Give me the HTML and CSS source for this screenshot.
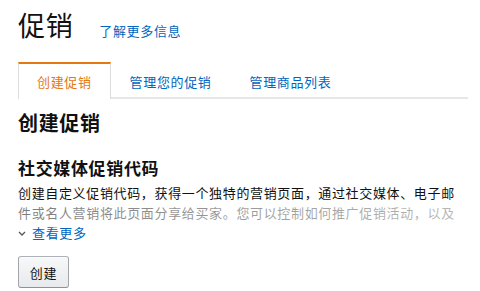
FILE: index.html
```html
<!DOCTYPE html>
<html lang="zh-CN">
<head>
    <meta charset="UTF-8">
    <meta name="viewport" content="width=device-width, initial-scale=1.0">
    <title>促销</title>
    <link rel="stylesheet" href="styles.css">
</head>
<body>

    <!-- Page header -->
    <div class="page-head">
        <h1>促销</h1>
        <a href="#" class="learn-more">了解更多信息</a>
    </div>

    <!-- Tabs -->
    <ul class="tabs">
        <li class="tab active"><a href="#">创建促销</a></li>
        <li class="tab"><a href="#">管理您的促销</a></li>
        <li class="tab"><a href="#">管理商品列表</a></li>
    </ul>

    <!-- Create promotion -->
    <div class="content">
        <h2>创建促销</h2>
        <h3>社交媒体促销代码</h3>
        <div class="expander">
            <p>创建自定义促销代码，获得一个独特的营销页面，通过社交媒体、电子邮件或名人营销将此页面分享给买家。您可以控制如何推广促销活动，以及</p>
            <div class="fade"></div>
        </div>
        <a href="#" class="see-more">
            <svg class="chevron" width="8" height="5" viewBox="0 0 8 5"><path d="M1 1 L4 4 L7 1" fill="none" stroke="#555" stroke-width="1.3"/></svg>
            <span>查看更多</span>
        </a>
        <button class="btn">创建</button>
    </div>

</body>
</html>
```

FILE: styles.css
```css
/* Body styling */
body {
    font-family: 'Noto Sans CJK SC', 'Noto Sans', sans-serif;
    font-size: 13px;
    letter-spacing: 0.05em;
    color: #111;
    margin: 0;
    padding: 0 12px 0 18px;
    background: #fff;
}

a {
    color: #0066c0;
    text-decoration: none;
}

/* Header */
.page-head {
    display: flex;
    align-items: baseline;
    gap: 26px;
    padding-top: 8px;
}

h1 {
    font-size: 27px;
    font-weight: normal;
    line-height: 34px;
    margin: 0;
}

.learn-more {
    line-height: 20px;
}

/* Tabs */
.tabs {
    display: flex;
    list-style: none;
    margin: 20px 0 0;
    padding: 0;
    border-bottom: 2px solid #e7e7e7;
}

.tab {
    border: 1px solid transparent;
    border-top: 2px solid transparent;
    border-bottom: none;
    margin-bottom: -2px;
}

.tab a {
    display: block;
    padding: 8px 18px 5px;
    line-height: 20px;
}

.tab.active {
    border-color: #ddd;
    border-top-color: #e47911;
    background: #fff;
    padding-bottom: 2px;
}

.tab.active a {
    color: #e47911;
}

/* Content */
h2 {
    font-size: 20px;
    line-height: 28px;
    margin: 10px 0 0;
}

h3 {
    font-size: 17px;
    line-height: 24px;
    margin: 19px 0 0;
}

.expander {
    position: relative;
    margin-top: 3px;
}

.expander p {
    margin: 0;
    line-height: 20px;
    max-width: 444px;
}

.fade {
    position: absolute;
    left: 0;
    right: 0;
    top: 20px;
    height: 20px;
    background: linear-gradient(to right, rgba(255, 255, 255, 0.45), rgba(255, 255, 255, 0.7));
}

.see-more {
    display: flex;
    align-items: center;
    line-height: 20px;
}

.chevron {
    margin-right: 6px;
}

.btn {
    display: block;
    margin-top: 13px;
    width: 51px;
    height: 32px;
    padding: 0;
    font-family: inherit;
    font-size: 13px;
    letter-spacing: 0.05em;
    color: #111;
    background: linear-gradient(to bottom, #f7f8fa, #e7e9ec);
    border: 1px solid #adb1b8;
    border-color: #adb1b8 #a2a6ac #8d9096;
    border-radius: 3px;
    box-shadow: inset 0 1px 0 rgba(255, 255, 255, 0.6);
    cursor: pointer;
}
```
